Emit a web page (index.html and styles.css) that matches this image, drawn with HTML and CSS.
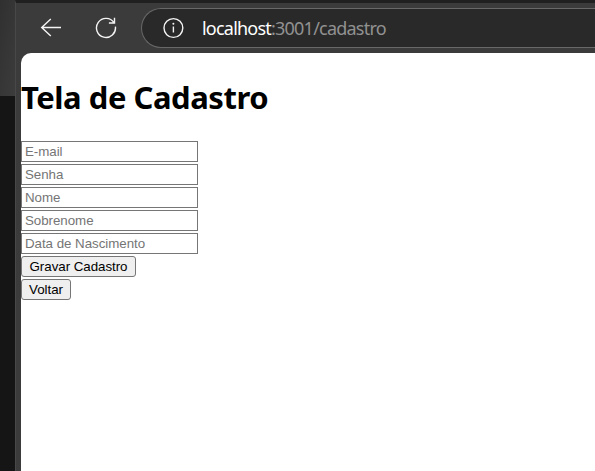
FILE: index.html
```html
<!DOCTYPE html>
<html lang="pt-BR">
<head>
<meta charset="utf-8">
<title>Tela de Cadastro</title>
<link rel="stylesheet" href="styles.css">
</head>
<body>
<div class="backdrop"></div>
<div class="browser">
  <header class="toolbar">
    <svg class="back" width="22" height="20" viewBox="0 0 22 20"><path d="M21 9.5H1.7M10.8 1L1.7 9.5l9.1 8.5"/></svg>
    <svg class="reload" width="22" height="22" viewBox="0 0 22 22"><path d="M20.4 9.6A9.5 9.5 0 1 1 19 5.8M19.5 .8v5.2h-5.6"/></svg>
    <div class="address">
      <svg class="info" width="22" height="22" viewBox="0 0 22 22"><circle cx="11.4" cy="11" r="9.4"/><path d="M11.4 9.5v6"/><circle class="dot" cx="11.4" cy="6.8" r="1"/></svg>
      <span class="url"><span class="host">localhost</span>:3001/cadastro</span>
    </div>
  </header>
  <main class="page">
    <h1>Tela de Cadastro</h1>
    <form>
      <input type="text" placeholder="E-mail">
      <input type="text" placeholder="Senha">
      <input type="text" placeholder="Nome">
      <input type="text" placeholder="Sobrenome">
      <input type="text" placeholder="Data de Nascimento">
      <button type="button" class="save">Gravar Cadastro</button>
      <button type="button" class="return">Voltar</button>
    </form>
  </main>
</div>
</body>
</html>
```

FILE: styles.css
```css
* { box-sizing: border-box; }

body {
  margin: 0;
  display: flex;
  width: 595px;
  height: 471px;
  overflow: hidden;
  background: #3b3b3b;
  font-family: "Noto Sans", sans-serif;
}

.backdrop {
  flex: 0 0 15px;
  background: linear-gradient(100deg, #303030, #3c3c3c) 0 0 / 15px 96px no-repeat #151515;
}

.browser {
  flex: 1;
  min-width: 0;
  display: flex;
  flex-direction: column;
  padding-left: 5px;
  border-left: 1px solid #484848;
  border-top: 3px solid #202020;
}

.toolbar {
  flex: 0 0 50px;
  display: flex;
  align-items: flex-start;
  padding-left: 19px;
}

.toolbar svg {
  flex: none;
  fill: none;
  stroke: #f4f4f4;
  stroke-width: 1.4;
}

.back { margin-top: 15px; }
.reload { margin: 14px 0 0 33px; }

.address {
  flex: 1;
  display: flex;
  align-items: center;
  height: 40px;
  margin: 5px 0 0 24px;
  padding-left: 20px;
  border: 1px solid #686868;
  border-right: 0;
  border-radius: 20px 0 0 20px;
  background: #292929;
}

.toolbar .dot {
  fill: #f4f4f4;
  stroke: none;
}

.url {
  margin-left: 18px;
  color: #919191;
  font-size: 18px;
  line-height: 24px;
  letter-spacing: -0.78px;
  white-space: nowrap;
}

.host { color: #fff; }

.page {
  flex: 1;
  background: #fff;
  border-top-left-radius: 10px;
}

h1 {
  margin: 22px 0;
  font-size: 31px;
  line-height: 44px;
  letter-spacing: -0.46px;
  white-space: nowrap;
}

form {
  display: flex;
  flex-direction: column;
  align-items: flex-start;
  gap: 2px;
}

input,
button {
  height: 21px;
  margin: 0;
  border: 1px solid #767676;
  font: 13.333px "Liberation Sans", Arial, sans-serif;
  letter-spacing: -0.04px;
}

input {
  width: 177px;
  padding: 1px 3px;
}

input::placeholder { color: #757575; }

button {
  padding: 0;
  border-radius: 3px;
  background: #efefef;
  color: #000;
}

.save { width: 115px; }
.return { width: 50px; }
```
